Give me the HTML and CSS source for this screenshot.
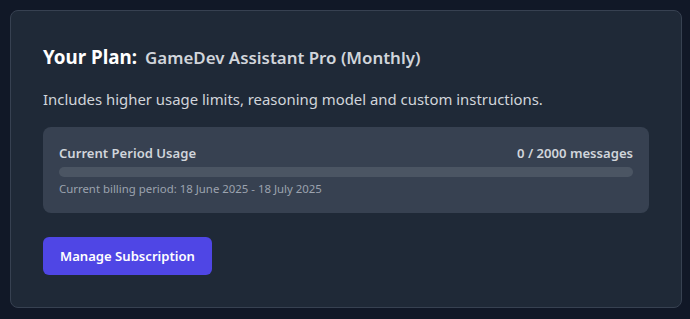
FILE: index.html
```html
<!DOCTYPE html>
<html lang="en">
<head>
  <meta charset="UTF-8" />
  <meta name="viewport" content="width=device-width, initial-scale=1.0"/>
  <title>Subscription</title>
  <link rel="stylesheet" href="styles.css">
</head>
<body>

  <!-- Plan Card -->
  <div class="plan-card">
    <div class="plan-title">
      <h2>Your Plan:</h2>
      <span class="plan-name">GameDev Assistant Pro (Monthly)</span>
    </div>

    <p class="plan-desc">Includes higher usage limits, reasoning model and custom instructions.</p>

    <!-- Usage -->
    <div class="usage-box">
      <div class="usage-row">
        <span>Current Period Usage</span>
        <span>0 / 2000 messages</span>
      </div>
      <div class="usage-bar">
        <div class="usage-fill" style="width: 0%"></div>
      </div>
      <div class="usage-period">Current billing period: 18 June 2025 - 18 July 2025</div>
    </div>

    <button class="manage-btn">Manage Subscription</button>
  </div>

</body>
</html>
```

FILE: styles.css
```css
body {
  margin: 0;
  padding: 10px 8px 11px 10px;
  background: #111827;
  font-family: "Noto Sans", "Open Sans", sans-serif;
  color: #d1d5db;
}

.plan-card {
  background: #1f2937;
  border: 1px solid #374151;
  border-radius: 8px;
  padding: 32px;
}

.plan-title {
  display: flex;
  align-items: center;
  gap: 8px;
  height: 28px;
}

.plan-title h2 {
  margin: 0;
  font-size: 18.8px;
  font-weight: 700;
  color: #ffffff;
}

.plan-name {
  font-size: 16.9px;
  font-weight: 600;
  color: #d1d5db;
}

.plan-desc {
  margin: 16px 0;
  font-size: 14.9px;
  line-height: 24px;
}

.usage-box {
  background: #374151;
  border-radius: 8px;
  padding: 16px;
}

.usage-row {
  display: flex;
  justify-content: space-between;
  font-size: 13.1px;
  line-height: 20px;
  font-weight: 600;
  color: #d1d5db;
}

.usage-bar {
  height: 10px;
  margin: 4px 0;
  background: #4b5563;
  border-radius: 5px;
  overflow: hidden;
}

.usage-fill {
  height: 100%;
  background: #6366f1;
}

.usage-period {
  font-size: 11.4px;
  line-height: 16px;
  color: #9ca3af;
}

.manage-btn {
  display: block;
  margin-top: 24px;
  height: 38px;
  padding: 0 17px;
  background: #4f46e5;
  border: none;
  border-radius: 6px;
  color: #ffffff;
  font-family: inherit;
  font-size: 13.1px;
  font-weight: 600;
  cursor: pointer;
}
```
